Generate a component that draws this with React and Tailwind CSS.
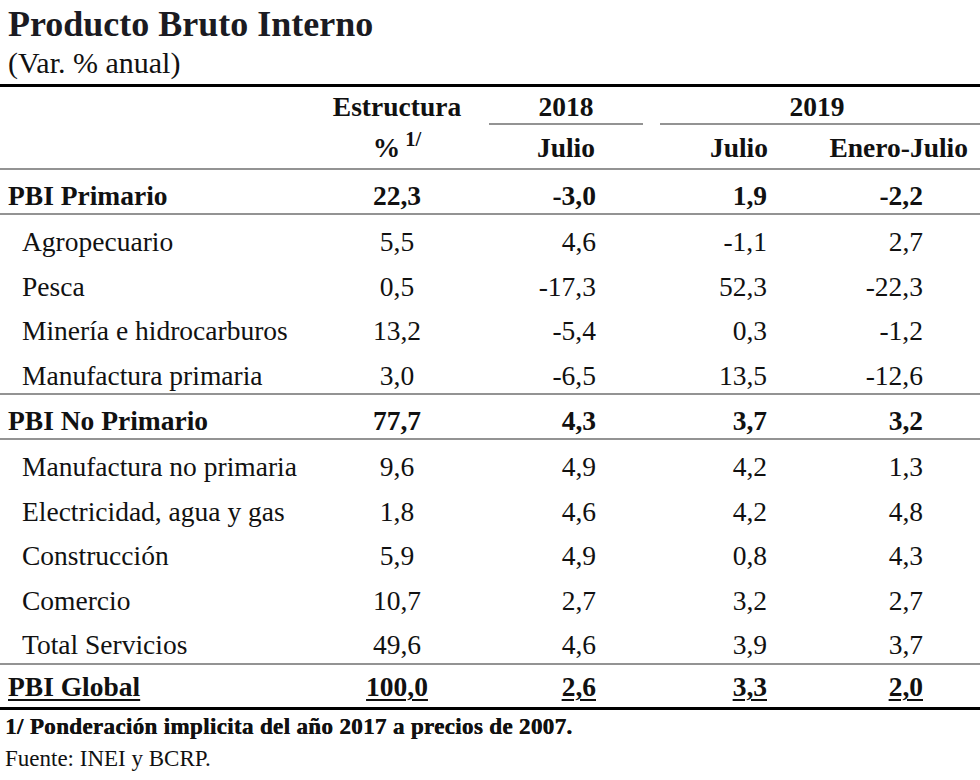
import React from "react";
import clsx from "clsx";

const primario = [
  { label: "Agropecuario", values: ["5,5", "4,6", "-1,1", "2,7"] },
  { label: "Pesca", values: ["0,5", "-17,3", "52,3", "-22,3"] },
  { label: "Minería e hidrocarburos", values: ["13,2", "-5,4", "0,3", "-1,2"] },
  { label: "Manufactura primaria", values: ["3,0", "-6,5", "13,5", "-12,6"] },
];

const noPrimario = [
  { label: "Manufactura no primaria", values: ["9,6", "4,9", "4,2", "1,3"] },
  { label: "Electricidad, agua y gas", values: ["1,8", "4,6", "4,2", "4,8"] },
  { label: "Construcción", values: ["5,9", "4,9", "0,8", "4,3"] },
  { label: "Comercio", values: ["10,7", "2,7", "3,2", "2,7"] },
  { label: "Total Servicios", values: ["49,6", "4,6", "3,9", "3,7"] },
];

const cols = "grid grid-cols-[320px_154px_176px_140px_190px]";

const Line = () => <div className="h-[2px] bg-[#939393]"></div>;

const Row = ({ label, values, bold, indent, underline, className }) => {
  const u = underline ? "underline decoration-2 underline-offset-[3px]" : "";
  return (
    <div className={clsx(cols, "items-end", bold && "font-bold", className)}>
      <div className={indent ? "pl-[22px]" : "pl-[8px]"}>
        <span className={u}>{label}</span>
      </div>
      <div className="text-center">
        <span className={u}>{values[0]}</span>
      </div>
      <div className="text-right pr-[54px]">
        <span className={u}>{values[1]}</span>
      </div>
      <div className="text-right pr-[23px]">
        <span className={u}>{values[2]}</span>
      </div>
      <div className="text-right pr-[57px]">
        <span className={u}>{values[3]}</span>
      </div>
    </div>
  );
};

const App = () => {
  return (
    <div className="w-[980px] h-[780px] bg-white text-[#111] font-['Liberation_Serif',serif] overflow-hidden">
      <h1 className="pt-[4px] pl-[8px] text-[36px] leading-[40px] font-bold text-[#1b1b22]">
        Producto Bruto Interno
      </h1>
      <p className="mt-[2px] pl-[8px] text-[30px] leading-[34px]">(Var. % anual)</p>

      <div className="mt-[4px] border-t-[3px] border-black text-[27.5px] leading-[32px]">
        {/* cabecera */}
        <div className={clsx(cols, "h-[36px] items-end font-bold")}>
          <div></div>
          <div className="text-center">Estructura</div>
          <div className="text-center pl-[8px]">2018</div>
          <div className="col-span-2 text-center pl-[4px]">2019</div>
        </div>
        <div className={clsx(cols, "h-[2px]")}>
          <div></div>
          <div></div>
          <div className="ml-[15px] mr-[7px] bg-[#939393]"></div>
          <div className="col-span-2 ml-[10px] bg-[#939393]"></div>
        </div>
        <div className={clsx(cols, "h-[43px] items-end pb-[4.3px] font-bold")}>
          <div></div>
          <div className="text-center">
            %<sup className="ml-[5px]">1/</sup>
          </div>
          <div className="text-right pr-[55px]">Julio</div>
          <div className="text-right pr-[22px]">Julio</div>
          <div className="text-right pr-[12px]">Enero-Julio</div>
        </div>
        <Line />

        <Row label="PBI Primario" values={["22,3", "-3,0", "1,9", "-2,2"]} bold className="h-[43px] pb-[1.3px]" />
        <Line />
        {primario.map((r) => (
          <Row key={r.label} label={r.label} values={r.values} indent className="h-[44.5px] pb-[1.3px]" />
        ))}
        <Line />

        <Row label="PBI No Primario" values={["77,7", "4,3", "3,7", "3,2"]} bold className="h-[43px] pb-[1.3px]" />
        <Line />
        {noPrimario.map((r) => (
          <Row key={r.label} label={r.label} values={r.values} indent className="h-[44.5px] pb-[1.3px]" />
        ))}
        <Line />

        <Row
          label="PBI Global"
          values={["100,0", "2,6", "3,3", "2,0"]}
          bold
          underline
          className="h-[42.5px] pb-[4.3px]"
        />
      </div>

      <div className="border-t-[3px] border-black pl-[5px]">
        <p className="mt-[6px] text-[23px] leading-[22px] font-bold tracking-[0.35px] [text-shadow:0.5px_0_0_currentColor]">
          1/ Ponderación implicita del año 2017 a precios de 2007.
        </p>
        <p className="mt-[7px] text-[23px] leading-[28px]">Fuente: INEI y BCRP.</p>
      </div>
    </div>
  );
};

export default App;
